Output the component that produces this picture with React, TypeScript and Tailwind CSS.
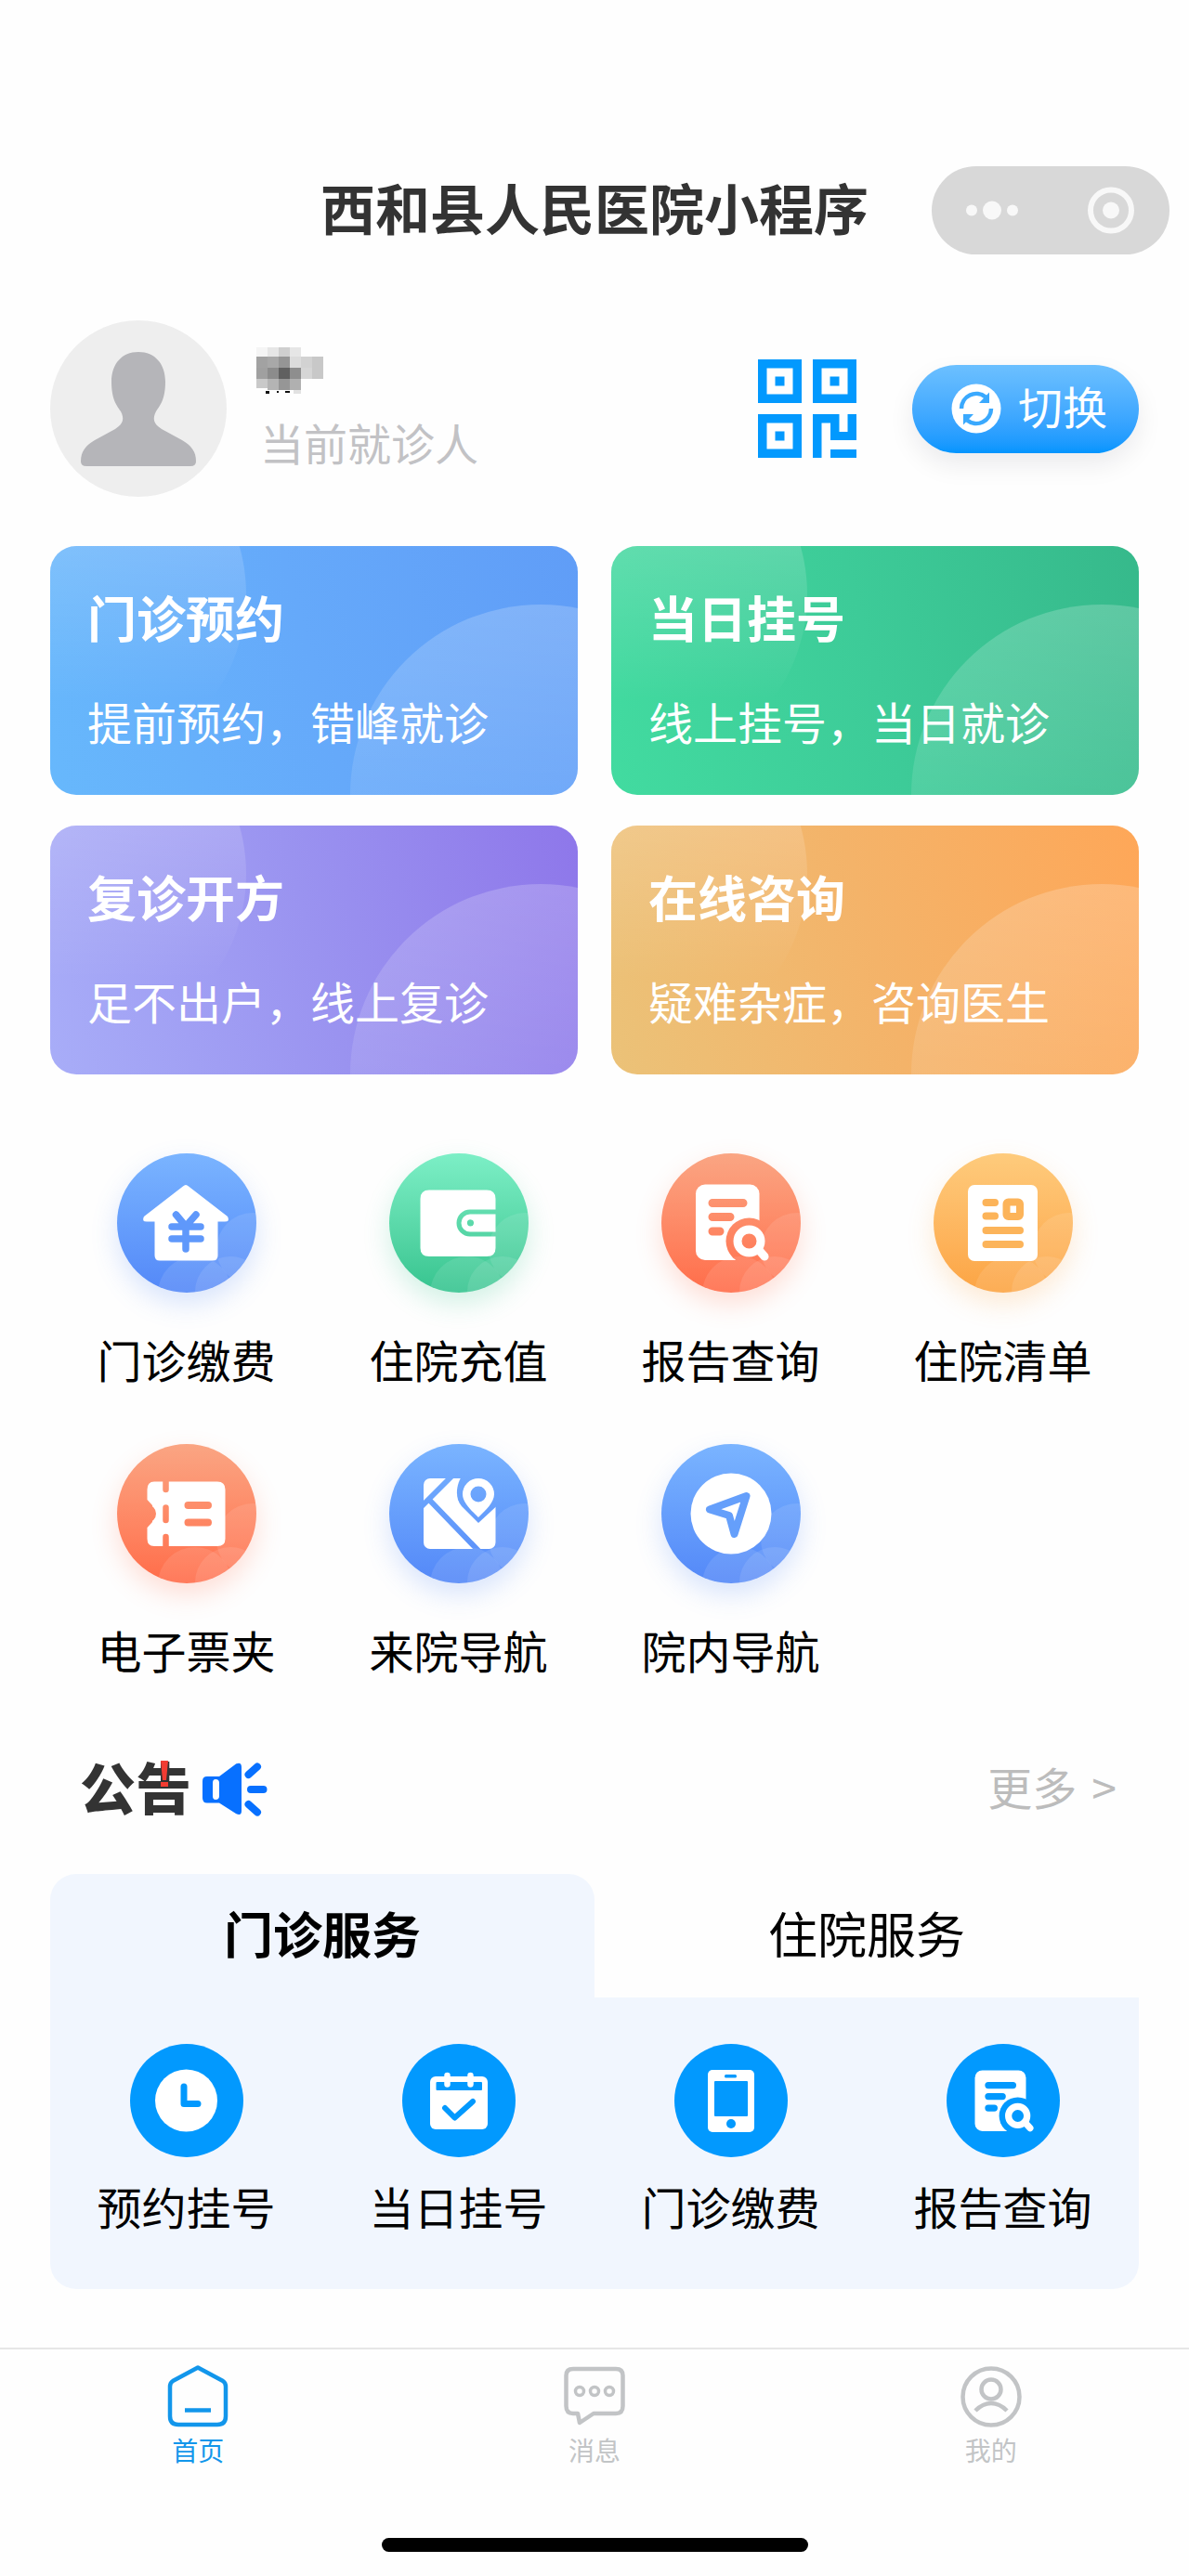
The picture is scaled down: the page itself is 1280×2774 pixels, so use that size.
import { useId, useState } from "react";
import type { ReactNode } from "react";
import clsx from "clsx";

const cards = [
   { title: "门诊预约", desc: "提前预约，错峰就诊", bg: "bg-[linear-gradient(75deg,#67b8fc,#65a9fa_50%,#609df7)]" },
   { title: "当日挂号", desc: "线上挂号，当日就诊", bg: "bg-[linear-gradient(75deg,#42dba0,#3dcb98_50%,#36b98b)]" },
   { title: "复诊开方", desc: "足不出户，线上复诊", bg: "bg-[linear-gradient(75deg,#a8adf8,#9a93f0_50%,#8e77ea)]" },
   { title: "在线咨询", desc: "疑难杂症，咨询医生", bg: "bg-[linear-gradient(75deg,#ebc278,#f4b369_50%,#fea758)]" },
];

const blue = "from-[#7ab4ff] to-[#5488f8] shadow-[0_12px_28px_rgba(84,136,248,0.22)]";
const green = "from-[#7cefc6] to-[#35c48f] shadow-[0_12px_28px_rgba(53,196,143,0.22)]";
const red = "from-[#faa583] to-[#ff6c49] shadow-[0_12px_28px_rgba(255,108,73,0.22)]";
const orange = "from-[#fecb7c] to-[#fca443] shadow-[0_12px_28px_rgba(252,164,67,0.22)]";

const services = [
   { label: "门诊缴费", color: blue, icon: <HouseIcon /> },
   { label: "住院充值", color: green, icon: <WalletIcon /> },
   { label: "报告查询", color: red, icon: <ReportIcon /> },
   { label: "住院清单", color: orange, icon: <ListIcon /> },
   { label: "电子票夹", color: red, icon: <TicketIcon /> },
   { label: "来院导航", color: blue, icon: <MapIcon /> },
   { label: "院内导航", color: blue, icon: <CompassIcon /> },
];

const clinic = [
   { label: "预约挂号", icon: <ClockIcon /> },
   { label: "当日挂号", icon: <CalendarIcon /> },
   { label: "门诊缴费", icon: <PhoneIcon /> },
   { label: "报告查询", icon: <svg viewBox="-1 -2 152 152" className="size-full"><ReportShape /></svg> },
];

function Badge({ children }: { children: ReactNode }) {
   return (
      <svg viewBox="0 0 150 150" className="size-full" aria-hidden="true">
         <g fill="#fff" fillOpacity="0.1">
            <circle cx="146" cy="103" r="39" />
            <circle cx="84" cy="151" r="40" />
            <circle cx="122" cy="149" r="38" />
         </g>
         {children}
      </svg>
   );
}

function HouseIcon() {
   return (
      <Badge>
         <path
            d="M71 35.500Q74 32.500 77 35.500L119 68Q122 73.500 116 73.500H108.500V110Q108.500 115.500 103 115.500H46Q40.500 115.500 40.500 110V73.500H32Q26 73.500 29 68Z"
            fill="#fff"
         />
         <path
            d="M63.500 66L74 78.500L85 66M59 79H90M59 92H90M74 79V103"
            fill="none"
            stroke="#5f98fb"
            strokeWidth="7.500"
            strokeLinecap="round"
            strokeLinejoin="round"
         />
      </Badge>
   );
}

function WalletIcon() {
   return (
      <Badge>
         <path
            d="M43 39.500H105Q114.500 39.500 114.500 49V60.500H87A14.500 14.500 0 0 0 87 89.500H114.500V102Q114.500 111 105 111H43Q33.500 111 33.500 102V49Q33.500 39.500 43 39.500Z"
            fill="#fff"
         />
         <path
            fillRule="evenodd"
            d="M114.500 65.500H87A9.500 9.500 0 0 0 87 84.500H114.500ZM87.500 71.200A3.600 3.600 0 1 1 87.500 78.400A3.600 3.600 0 1 1 87.500 71.200Z"
            fill="#fff"
         />
      </Badge>
   );
}

function ReportShape() {
   const id = useId();
   return (
      <>
         <mask id={id} maskUnits="userSpaceOnUse" x="0" y="0" width="150" height="150">
            <rect width="150" height="150" fill="#fff" />
            <path d="M55 53.500H88M55 68.500H74M55 84H63" stroke="#000" strokeWidth="9" strokeLinecap="round" />
            <circle cx="94.500" cy="94.500" r="25" fill="#000" />
            <path d="M84 110H110V120H84Z" fill="#000" />
         </mask>
         <rect x="37" y="33.500" width="68.500" height="81.500" rx="10" fill="#fff" mask={`url(#${id})`} />
         <circle cx="94.500" cy="94.500" r="12.500" fill="none" stroke="#fff" strokeWidth="9" />
         <path d="M104 103L111 111" stroke="#fff" strokeWidth="9" strokeLinecap="round" />
      </>
   );
}

function ReportIcon() {
   return (
      <Badge>
         <ReportShape />
      </Badge>
   );
}

function ListIcon() {
   return (
      <Badge>
         <rect x="37" y="34" width="75" height="82" rx="7" fill="#fff" />
         <path d="M56.500 53H66M56.500 67.500H66M56.500 83H93M56.500 98H93" stroke="#fcb45a" strokeWidth="8" strokeLinecap="round" />
         <rect x="78.500" y="52.500" width="14.500" height="15.500" rx="2" fill="none" stroke="#fcb45a" strokeWidth="8" />
      </Badge>
   );
}

function TicketIcon() {
   return (
      <Badge>
         <mask id="ticket-cut" maskUnits="userSpaceOnUse" x="0" y="0" width="150" height="150">
            <rect width="150" height="150" fill="#fff" />
            <circle cx="32" cy="75" r="10" fill="#000" />
            <path d="M52.500 36V49M52.500 68.500V82M52.500 100V114" stroke="#000" strokeWidth="6.500" strokeLinecap="round" />
            <path d="M76.500 66H98M76.500 84.500H98" stroke="#000" strokeWidth="8" strokeLinecap="round" />
         </mask>
         <path
            d="M40 40.500H108Q116.500 40.500 116.500 49V102Q116.500 110 108 110H40Q32.500 110 32.500 102V90L38 84V66L32.500 60V49Q32.500 40.500 40 40.500Z"
            fill="#fff"
            mask="url(#ticket-cut)"
         />
      </Badge>
   );
}

function MapIcon() {
   return (
      <Badge>
         <mask id="map-cut" maskUnits="userSpaceOnUse" x="0" y="0" width="150" height="150">
            <rect width="150" height="150" fill="#fff" />
            <path d="M70 32L32 70M44 61L98 117" stroke="#000" strokeWidth="6" />
            <path d="M80 32C72 42 70 58 78 67L96 85L122 61V30Z" fill="#000" />
         </mask>
         <rect x="37" y="37" width="77.500" height="76" rx="7" fill="#fff" mask="url(#map-cut)" />
         <path
            fillRule="evenodd"
            d="M96 37A17 17 0 0 1 113 54C113 63 104 71 96 79C88 71 79 63 79 54A17 17 0 0 1 96 37ZM96 45.500A8.500 8.500 0 1 0 96 62.500A8.500 8.500 0 1 0 96 45.500Z"
            fill="#fff"
         />
      </Badge>
   );
}

function CompassIcon() {
   return (
      <Badge>
         <circle cx="75" cy="75" r="43.500" fill="#fff" />
         <path d="M91.500 56L52 70.500L73 77L78.500 97Z" fill="none" stroke="#659ffb" strokeWidth="8" strokeLinejoin="round" />
      </Badge>
   );
}

function ClockIcon() {
   return (
      <svg viewBox="0 0 122 122" className="size-full" aria-hidden="true">
         <circle cx="60.500" cy="61" r="33.500" fill="#fff" />
         <path d="M58 46V64.500H73" fill="none" stroke="#0299fe" strokeWidth="7" strokeLinecap="round" strokeLinejoin="round" />
      </svg>
   );
}

function CalendarIcon() {
   return (
      <svg viewBox="0 0 122 122" className="size-full" aria-hidden="true">
         <rect x="30" y="35" width="62" height="57" rx="6" fill="#fff" />
         <rect x="36.500" y="41" width="49.500" height="9" rx="1" fill="#0299fe" />
         <path d="M48.500 34V43.500M73.500 34V43.500" stroke="#fff" strokeWidth="6.500" strokeLinecap="round" />
         <path d="M46 69L56.500 79.500L76 62" fill="none" stroke="#0299fe" strokeWidth="6" strokeLinecap="round" strokeLinejoin="round" />
      </svg>
   );
}

function PhoneIcon() {
   return (
      <svg viewBox="0 0 122 122" className="size-full" aria-hidden="true">
         <rect x="36" y="28" width="50" height="67" rx="5" fill="#fff" />
         <rect x="43" y="40" width="36" height="38" rx="1" fill="#0299fe" />
         <circle cx="61" cy="86" r="5" fill="#0299fe" />
         <rect x="54" y="33" width="13" height="3.500" rx="1.500" fill="#0299fe" />
      </svg>
   );
}

function Avatar() {
   return (
      <svg viewBox="0 0 190 190" className="size-[190px] shrink-0" role="img" aria-label="头像">
         <circle cx="95" cy="95" r="95" fill="#eeeeee" />
         <path
            d="M95 34C113 34 124 47 124 66C124 84 119 91 114 98C110 106 111 111 120 117L142 129C152 135 157 141 157 152Q157 157 151 157H39Q33 157 33 152C33 141 38 135 48 129L70 117C79 111 80 106 76 98C71 91 66 84 66 66C66 47 77 34 95 34Z"
            fill="#b5b5b9"
         />
      </svg>
   );
}

// x, y, width, height, grey
const mosaic: [number, number, number, number, string][] = [
   [0, 0, 12, 10, "#f5f5f5"], [12, 0, 12, 10, "#e6e6e6"], [24, 0, 12, 10, "#cfcfcf"], [36, 0, 12, 10, "#e6e6e6"],
   [0, 10, 12, 12, "#a2a2a2"], [12, 10, 12, 12, "#a8a8a8"], [24, 10, 12, 12, "#959595"], [36, 10, 12, 12, "#dcdcdc"],
   [48, 10, 12, 12, "#d2d2d2"], [60, 10, 12, 12, "#c8c8c8"],
   [0, 22, 12, 12, "#a0a0a0"], [12, 22, 12, 12, "#8c8c8c"], [24, 22, 12, 12, "#606060"], [36, 22, 12, 12, "#8e8e8e"],
   [48, 22, 12, 12, "#d6d6d6"], [60, 22, 12, 12, "#c8c8c8"],
   [0, 34, 12, 10, "#c9c9c9"], [12, 34, 12, 12, "#b4b4b4"], [24, 34, 12, 12, "#969696"], [36, 34, 12, 12, "#b0b0b0"],
   [10, 47, 4, 3, "#111"], [22, 47, 2, 2, "#111"], [31, 47, 5, 2, "#111"], [40, 46, 8, 4, "#e2e2e2"],
];

function QrIcon() {
   return (
      <svg viewBox="0 0 106 106" className="size-[106px]" fill="#0299fe" aria-hidden="true">
         <path fillRule="evenodd" d="M0 0H47V47H0ZM9.500 9.500V37.500H37.500V9.500ZM18.500 18.500H28.500V28.500H18.500Z" />
         <path fillRule="evenodd" d="M59 0H106V47H59ZM68.500 9.500V37.500H96.500V9.500ZM77.500 18.500H87.500V28.500H77.500Z" />
         <path fillRule="evenodd" d="M0 59H47V106H0ZM9.500 68.500V96.500H37.500V68.500ZM18.500 77.500H28.500V87.500H18.500Z" />
         <path d="M59 59H87.500V78H96.500V59H106V87H78V68.500H68.500V106H59ZM78 97H106V106H78Z" />
      </svg>
   );
}

function SwitchIcon() {
   return (
      <svg viewBox="0 0 54 54" className="size-[54px]" aria-hidden="true">
         <circle cx="27" cy="27" r="26.500" fill="#fff" />
         <path d="M11 27A16 16 0 0 1 37 14.500M43 27A16 16 0 0 1 17 39.500" fill="none" stroke="#3aa9fe" strokeWidth="4.500" />
         <path d="M41 9.500V21H30ZM13 44.500V33H24Z" fill="#3aa9fe" />
      </svg>
   );
}

function SpeakerIcon() {
   return (
      <svg viewBox="0 0 70 58" className="h-[58px] w-[70px]" aria-hidden="true">
         <path
            fillRule="evenodd"
            d="M5 15H18L36 1.500Q42 -1 42 5V52Q42 58 36 55L18 43.500H5Q0 43.500 0 38V20Q0 15 5 15ZM14 18Q11 18 11 22V36Q11 40 14 40Q18 40 18 36V22Q18 18 14 18Z"
            fill="#0770ff"
         />
         <path d="M49.500 13L59 4.500M52 29H65.500M49.500 45L59 53.500" stroke="#0770ff" strokeWidth="8" strokeLinecap="round" />
      </svg>
   );
}

function HomeTabIcon() {
   return (
      <svg viewBox="0 0 66 68" className="h-[68px] w-[66px]" fill="none" stroke="currentColor" strokeWidth="4.500" aria-hidden="true">
         <path d="M33 3.500L60 18Q63 20 63 24V56Q63 65 54 65H12Q3 65 3 56V24Q3 20 6 18Z" strokeLinejoin="round" />
         <path d="M19 49.500H47" />
      </svg>
   );
}

function MessageTabIcon() {
   return (
      <svg viewBox="0 0 66 68" className="h-[68px] w-[66px]" fill="none" stroke="currentColor" strokeWidth="4.500" aria-hidden="true">
         <path d="M10 5H56Q63.500 5 63.500 12V45Q63.500 53 56 53H32L17 63L15 53H10Q2.500 53 2.500 45V12Q2.500 5 10 5Z" strokeLinejoin="round" />
         <g strokeWidth="3.500">
            <circle cx="17" cy="29" r="4.500" />
            <circle cx="33" cy="29" r="4.500" />
            <circle cx="49" cy="29" r="4.500" />
         </g>
      </svg>
   );
}

function MineTabIcon() {
   return (
      <svg viewBox="0 0 66 68" className="h-[68px] w-[66px]" fill="none" stroke="currentColor" strokeWidth="4.500" aria-hidden="true">
         <circle cx="33" cy="35" r="30.500" />
         <circle cx="33" cy="27" r="10.500" />
         <path d="M16 50Q24 42 33 42Q42 42 50 50" />
      </svg>
   );
}

const tabbar = [
   { label: "首页", icon: <HomeTabIcon />, active: true },
   { label: "消息", icon: <MessageTabIcon />, active: false },
   { label: "我的", icon: <MineTabIcon />, active: false },
];

export default function App() {
   const [tab, setTab] = useState(0);

   return (
      <div className="min-h-screen bg-[#fefefe] pt-[179px] font-['Noto_Sans_CJK_SC',sans-serif] text-black">
         <header className="grid grid-cols-[1fr_auto_1fr] items-center px-[21px]">
            <h1 className="col-start-2 pb-2 text-[59px] leading-[84px] font-bold text-[#333333]">西和县人民医院小程序</h1>
            <button type="button" aria-label="小程序菜单" className="h-[95px] w-64 justify-self-end rounded-full bg-[#d8d8d8]">
               <svg viewBox="0 0 256 95" className="size-full" fill="#f8f8f8">
                  <circle cx="43" cy="47.500" r="6" />
                  <circle cx="65" cy="47.500" r="10" />
                  <circle cx="87" cy="47.500" r="6" />
                  <circle cx="193" cy="47.500" r="22" fill="none" stroke="#f8f8f8" strokeWidth="6" />
                  <circle cx="193" cy="47.500" r="9" />
               </svg>
            </button>
         </header>

         <main className="px-[54px]">
            <section className="mt-[71px] flex items-center">
               <Avatar />
               <div className="ml-8 grow pt-1">
                  <svg viewBox="0 0 72 52" className="h-[52px] w-[72px]" shapeRendering="crispEdges" aria-hidden="true">
                     {mosaic.map(([x, y, w, h, fill]) => (
                        <rect key={`${x}-${y}`} x={x} y={y} width={w} height={h} fill={fill} />
                     ))}
                  </svg>
                  <p className="mt-4 pl-1 text-[47px] leading-[68px] text-[#c2c2c5]">当前就诊人</p>
               </div>
               <button type="button" aria-label="就诊码">
                  <QrIcon />
               </button>
               <button
                  type="button"
                  className="ml-[60px] flex h-[95px] w-[244px] items-center justify-center gap-[18px] rounded-full bg-linear-to-b from-[#6cc0ff] to-[#0195fe] pl-2 text-[48px] leading-[68px] text-white shadow-[0_12px_28px_rgba(0,0,40,0.08)]"
               >
                  <SwitchIcon />
                  <span className="pb-2">切换</span>
               </button>
            </section>

            <section className="mt-[53px] grid grid-cols-2 gap-x-9 gap-y-[33px]">
               {cards.map((card) => (
                  <button
                     key={card.title}
                     type="button"
                     className={clsx("relative h-[268px] overflow-hidden rounded-[28px] px-10 pb-2 text-left text-white", card.bg)}
                  >
                     <span className="absolute -top-[138px] -left-[169px] size-[380px] rounded-full bg-linear-to-b from-white/30 to-white/0 to-80%" />
                     <span className="absolute top-[63px] left-[323px] size-[410px] rounded-full bg-linear-to-b from-white/20 to-white/0" />
                     <span className="relative block text-[53px] leading-[76px] font-bold">{card.title}</span>
                     <span className="relative mt-10 block text-[48px] leading-[68px]">{card.desc}</span>
                  </button>
               ))}
            </section>

            <section className="mt-[85px] grid grid-cols-4 gap-y-[58px]">
               {services.map((item) => (
                  <button key={item.label} type="button" className="flex flex-col items-center gap-[37px]">
                     <span className={clsx("size-[150px] overflow-hidden rounded-full bg-linear-to-b", item.color)}>{item.icon}</span>
                     <span className="text-[48px] leading-[68px]">{item.label}</span>
                  </button>
               ))}
            </section>

            <section className="mt-[81px] flex items-center justify-between pr-6 pl-8">
               <div className="flex items-center gap-3">
                  <h2 className="relative pb-2 text-[60px] leading-[64px] font-black text-[#333333]">
                     公告
                     <svg viewBox="0 0 8 30" className="absolute top-1 left-[87px] h-[30px] w-2" fill="#f23c32" aria-hidden="true">
                        <path d="M0 1H8L6 22H2ZM0 24H8V29H0Z" />
                     </svg>
                  </h2>
                  <SpeakerIcon />
               </div>
               <a href="#notice" className="flex gap-4 pb-2 text-[48px] leading-[64px] text-[#bcbcbc]">
                  更多 <span>&gt;</span>
               </a>
            </section>

            <section className="mt-[55px]">
               <div role="tablist" className="grid grid-cols-2">
                  {["门诊服务", "住院服务"].map((name, i) => (
                     <button
                        key={name}
                        type="button"
                        role="tab"
                        aria-selected={tab === i}
                        onClick={() => setTab(i)}
                        className={clsx("h-[133px] rounded-t-[28px] pb-2 text-[53px] leading-[76px]", tab === i && "bg-[#f1f6fe] font-bold")}
                     >
                        {name}
                     </button>
                  ))}
               </div>
               <div role="tabpanel" className="grid grid-cols-4 rounded-b-[28px] bg-[#f1f6fe] pt-[50px] pb-14">
                  {clinic.map((item) => (
                     <button key={item.label} type="button" className="flex flex-col items-center gap-[18px]">
                        <span className="size-[122px] rounded-full bg-[#0299fe]">{item.icon}</span>
                        <span className="text-[48px] leading-[68px]">{item.label}</span>
                     </button>
                  ))}
               </div>
            </section>
         </main>

         <nav className="mt-[63px] grid grid-cols-3 border-t-2 border-[#e6e6e6] pt-4">
            {tabbar.map((item) => (
               <a
                  key={item.label}
                  href="#"
                  className={clsx("flex flex-col items-center gap-1", item.active ? "text-[#1296eb]" : "text-[#c2c4c6]")}
               >
                  {item.icon}
                  <span className="text-[28px] leading-10">{item.label}</span>
               </a>
            ))}
         </nav>
         <div className="mx-auto mt-[75px] h-[15px] w-[459px] rounded-full bg-black" />
      </div>
   );
}
